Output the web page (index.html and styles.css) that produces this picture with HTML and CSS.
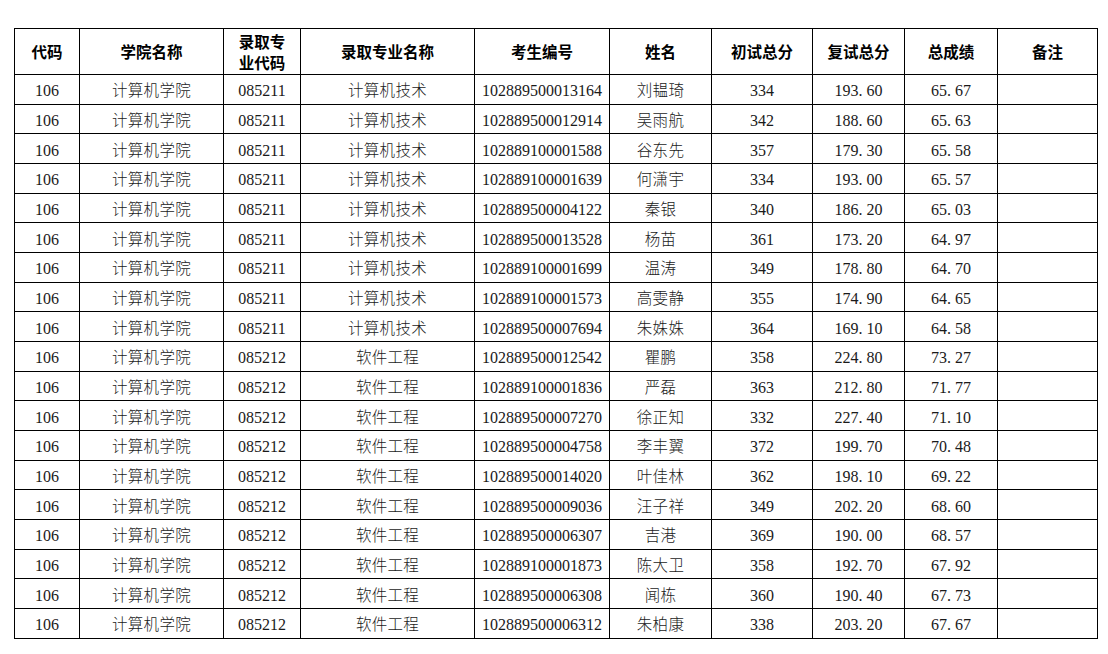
FILE: index.html
```html
<!DOCTYPE html>
<html lang="zh-CN">
<head>
<meta charset="utf-8">
<title>录取名单</title>
<link rel="stylesheet" href="styles.css">
</head>
<body>
<table class="grid">
  <colgroup>
    <col class="c1"><col class="c2"><col class="c3"><col class="c4"><col class="c5">
    <col class="c6"><col class="c7"><col class="c8"><col class="c9"><col class="c10">
  </colgroup>
  <thead>
    <tr>
      <th>代码</th><th>学院名称</th><th>录取专<br>业代码</th><th>录取专业名称</th><th>考生编号</th>
      <th>姓名</th><th>初试总分</th><th>复试总分</th><th>总成绩</th><th>备注</th>
    </tr>
  </thead>
  <tbody>
    <tr><td>106</td><td class="zh">计算机学院</td><td>085211</td><td class="zh">计算机技术</td><td>102889500013164</td><td class="zh">刘韫琦</td><td>334</td><td>193<span class="dp">.</span>60</td><td>65<span class="dp">.</span>67</td><td></td></tr>
    <tr><td>106</td><td class="zh">计算机学院</td><td>085211</td><td class="zh">计算机技术</td><td>102889500012914</td><td class="zh">吴雨航</td><td>342</td><td>188<span class="dp">.</span>60</td><td>65<span class="dp">.</span>63</td><td></td></tr>
    <tr><td>106</td><td class="zh">计算机学院</td><td>085211</td><td class="zh">计算机技术</td><td>102889100001588</td><td class="zh">谷东先</td><td>357</td><td>179<span class="dp">.</span>30</td><td>65<span class="dp">.</span>58</td><td></td></tr>
    <tr><td>106</td><td class="zh">计算机学院</td><td>085211</td><td class="zh">计算机技术</td><td>102889100001639</td><td class="zh">何潇宇</td><td>334</td><td>193<span class="dp">.</span>00</td><td>65<span class="dp">.</span>57</td><td></td></tr>
    <tr><td>106</td><td class="zh">计算机学院</td><td>085211</td><td class="zh">计算机技术</td><td>102889500004122</td><td class="zh">秦银</td><td>340</td><td>186<span class="dp">.</span>20</td><td>65<span class="dp">.</span>03</td><td></td></tr>
    <tr><td>106</td><td class="zh">计算机学院</td><td>085211</td><td class="zh">计算机技术</td><td>102889500013528</td><td class="zh">杨苗</td><td>361</td><td>173<span class="dp">.</span>20</td><td>64<span class="dp">.</span>97</td><td></td></tr>
    <tr><td>106</td><td class="zh">计算机学院</td><td>085211</td><td class="zh">计算机技术</td><td>102889100001699</td><td class="zh">温涛</td><td>349</td><td>178<span class="dp">.</span>80</td><td>64<span class="dp">.</span>70</td><td></td></tr>
    <tr><td>106</td><td class="zh">计算机学院</td><td>085211</td><td class="zh">计算机技术</td><td>102889100001573</td><td class="zh">高雯静</td><td>355</td><td>174<span class="dp">.</span>90</td><td>64<span class="dp">.</span>65</td><td></td></tr>
    <tr><td>106</td><td class="zh">计算机学院</td><td>085211</td><td class="zh">计算机技术</td><td>102889500007694</td><td class="zh">朱姝姝</td><td>364</td><td>169<span class="dp">.</span>10</td><td>64<span class="dp">.</span>58</td><td></td></tr>
    <tr><td>106</td><td class="zh">计算机学院</td><td>085212</td><td class="zh">软件工程</td><td>102889500012542</td><td class="zh">瞿鹏</td><td>358</td><td>224<span class="dp">.</span>80</td><td>73<span class="dp">.</span>27</td><td></td></tr>
    <tr><td>106</td><td class="zh">计算机学院</td><td>085212</td><td class="zh">软件工程</td><td>102889100001836</td><td class="zh">严磊</td><td>363</td><td>212<span class="dp">.</span>80</td><td>71<span class="dp">.</span>77</td><td></td></tr>
    <tr><td>106</td><td class="zh">计算机学院</td><td>085212</td><td class="zh">软件工程</td><td>102889500007270</td><td class="zh">徐正知</td><td>332</td><td>227<span class="dp">.</span>40</td><td>71<span class="dp">.</span>10</td><td></td></tr>
    <tr><td>106</td><td class="zh">计算机学院</td><td>085212</td><td class="zh">软件工程</td><td>102889500004758</td><td class="zh">李丰翼</td><td>372</td><td>199<span class="dp">.</span>70</td><td>70<span class="dp">.</span>48</td><td></td></tr>
    <tr><td>106</td><td class="zh">计算机学院</td><td>085212</td><td class="zh">软件工程</td><td>102889500014020</td><td class="zh">叶佳林</td><td>362</td><td>198<span class="dp">.</span>10</td><td>69<span class="dp">.</span>22</td><td></td></tr>
    <tr><td>106</td><td class="zh">计算机学院</td><td>085212</td><td class="zh">软件工程</td><td>102889500009036</td><td class="zh">汪子祥</td><td>349</td><td>202<span class="dp">.</span>20</td><td>68<span class="dp">.</span>60</td><td></td></tr>
    <tr><td>106</td><td class="zh">计算机学院</td><td>085212</td><td class="zh">软件工程</td><td>102889500006307</td><td class="zh">吉港</td><td>369</td><td>190<span class="dp">.</span>00</td><td>68<span class="dp">.</span>57</td><td></td></tr>
    <tr><td>106</td><td class="zh">计算机学院</td><td>085212</td><td class="zh">软件工程</td><td>102889100001873</td><td class="zh">陈大卫</td><td>358</td><td>192<span class="dp">.</span>70</td><td>67<span class="dp">.</span>92</td><td></td></tr>
    <tr><td>106</td><td class="zh">计算机学院</td><td>085212</td><td class="zh">软件工程</td><td>102889500006308</td><td class="zh">闻栋</td><td>360</td><td>190<span class="dp">.</span>40</td><td>67<span class="dp">.</span>73</td><td></td></tr>
    <tr><td>106</td><td class="zh">计算机学院</td><td>085212</td><td class="zh">软件工程</td><td>102889500006312</td><td class="zh">朱柏康</td><td>338</td><td>203<span class="dp">.</span>20</td><td>67<span class="dp">.</span>67</td><td></td></tr>
  </tbody>
</table>
</body>
</html>
```

FILE: styles.css
```css
html, body {
  margin: 0;
  padding: 0;
  background: #ffffff;
}

body {
  padding: 28px 0 0 14px;
}

.grid {
  border-collapse: collapse;
  table-layout: fixed;
  width: 1083px;
  font-family: "Liberation Serif", "Noto Sans CJK SC", serif;
  font-size: 16px;
  color: #1a1a1a;
}

.c1 { width: 65px; }
.c2 { width: 144px; }
.c3 { width: 77px; }
.c4 { width: 174px; }
.c5 { width: 135px; }
.c6 { width: 102px; }
.c7 { width: 101px; }
.c8 { width: 92px; }
.c9 { width: 93px; }
.c10 { width: 100px; }

.grid th,
.grid td {
  border: 1px solid #000;
  text-align: center;
  vertical-align: middle;
  padding: 0;
  white-space: nowrap;
}

.grid thead tr {
  height: 46px;
}

.grid th {
  font-family: "Noto Sans CJK SC", sans-serif;
  font-weight: 700;
  font-size: 15.5px;
  line-height: 21px;
  color: #000;
}

.grid tbody tr {
  height: 29.68px;
}

.grid td {
  line-height: 20px;
  padding-top: 4px;
}

.grid td.zh {
  font-family: "Noto Sans CJK SC", sans-serif;
  font-weight: 300;
  font-size: 15.5px;
  letter-spacing: 0.3px;
  padding-top: 0;
}

.dp {
  display: inline-block;
  width: 0.5em;
  text-align: left;
}
```
